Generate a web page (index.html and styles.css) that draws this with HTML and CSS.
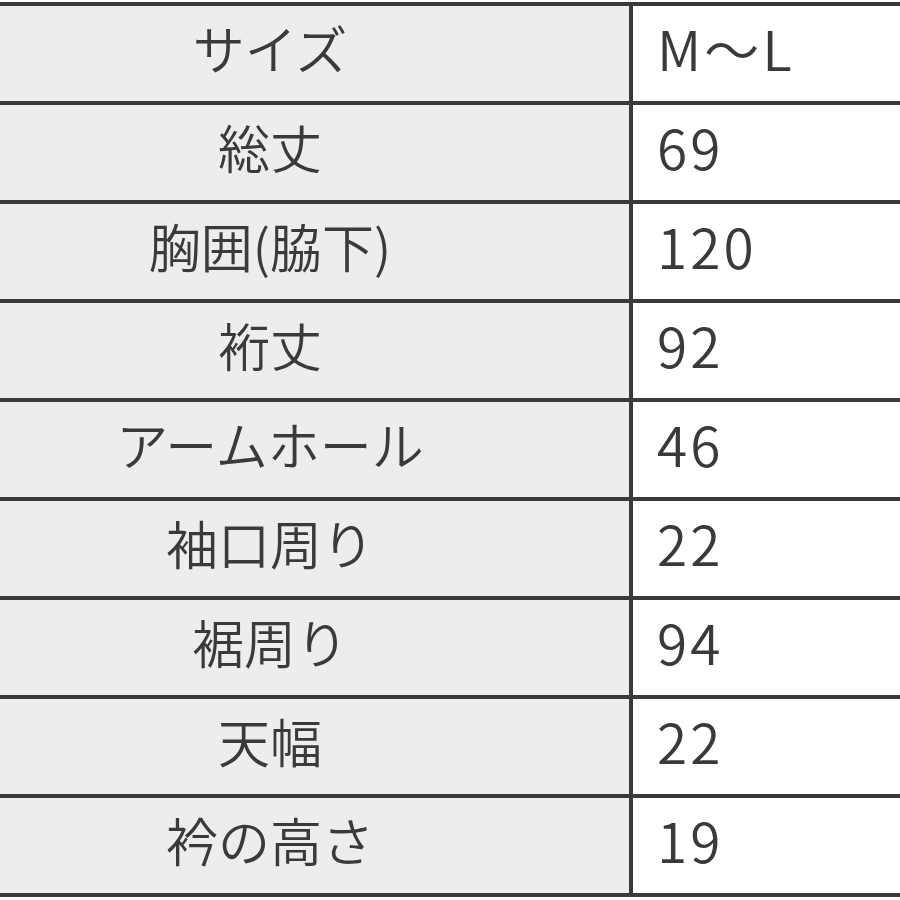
FILE: index.html
```html
<!DOCTYPE html>
<html lang="ja">
<head>
<meta charset="utf-8">
<link rel="stylesheet" href="styles.css">
</head>
<body>
<div class="table">
  <div class="row"><div class="label">サイズ</div><div class="value">M〜L</div></div>
  <div class="row"><div class="label">総丈</div><div class="value">69</div></div>
  <div class="row"><div class="label">胸囲(脇下)</div><div class="value">120</div></div>
  <div class="row"><div class="label">裄丈</div><div class="value">92</div></div>
  <div class="row"><div class="label">アームホール</div><div class="value">46</div></div>
  <div class="row"><div class="label">袖口周り</div><div class="value">22</div></div>
  <div class="row"><div class="label">裾周り</div><div class="value">94</div></div>
  <div class="row"><div class="label">天幅</div><div class="value">22</div></div>
  <div class="row"><div class="label">衿の高さ</div><div class="value">19</div></div>
</div>
</body>
</html>
```
FILE: styles.css
```css
html, body {
  margin: 0;
  padding: 0;
  background: #ffffff;
}
body {
  padding-top: 2px;
  font-family: "Noto Sans CJK JP", "Noto Sans", sans-serif;
  font-weight: 350;
  color: #3a3a3a;
}
.table {
  border-top: 4px solid #3a3a3a;
}
.row {
  display: grid;
  grid-template-columns: 633px 1fr;
  height: 95px;
  border-bottom: 4px solid #3a3a3a;
}
.label {
  background: #ededed;
  border-right: 4px solid #3a3a3a;
  display: flex;
  align-items: center;
  justify-content: center;
  padding-right: 89px;
  padding-bottom: 12px;
  font-size: 52px;
  line-height: 1;
}
.value {
  display: flex;
  align-items: center;
  padding-left: 24px;
  padding-bottom: 12px;
  font-size: 55px;
  letter-spacing: 3px;
  line-height: 1;
}
```
